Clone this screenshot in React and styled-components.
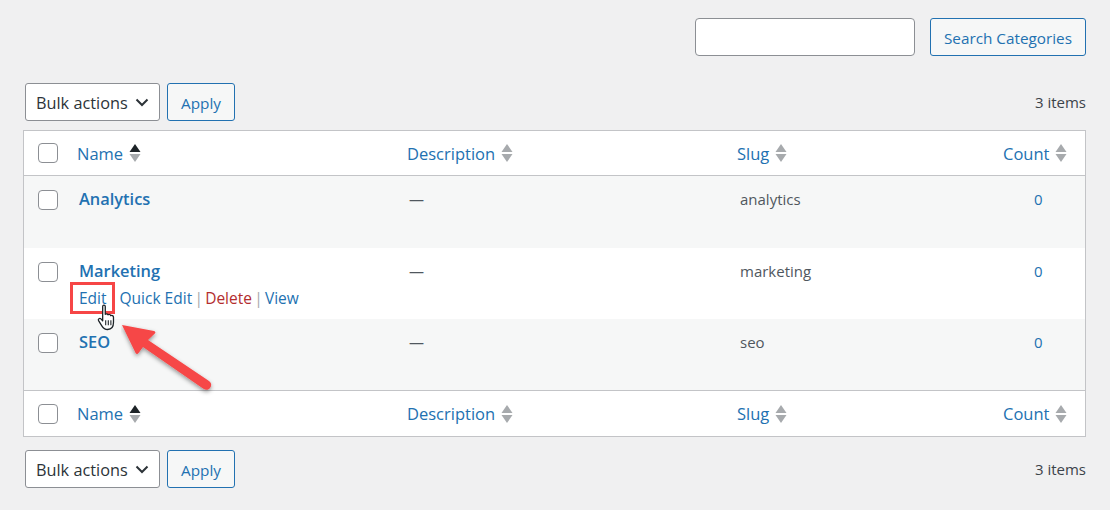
import styled, { createGlobalStyle } from 'styled-components';

const GlobalStyle = createGlobalStyle`
    html, body{
        margin: 0;
        padding: 0;
        background: #f0f0f1;
    }
    body{
        font-family: "Open Sans", "Noto Sans", "Liberation Sans", sans-serif;
        color: #3c434a;
    }
`;

const columns = [
    { label: 'Name', active: true },
    { label: 'Description' },
    { label: 'Slug' },
    { label: 'Count' },
];

const rows = [
    { name: 'Analytics', slug: 'analytics', alt: true },
    { name: 'Marketing', slug: 'marketing', actions: true },
    { name: 'SEO', slug: 'seo', alt: true },
];

function SortIcon({ active }){
    return (
        <SortSvg width="12" height="18" viewBox="0 0 12 18">
            <path d="M6 0 L11.5 8 H0.5 Z" fill={active ? '#1d2327' : '#a7aaad'} />
            <path d="M0.5 10 H11.5 L6 18 Z" fill="#a7aaad" />
        </SortSvg>
    );
}

function HeadRow({ bottom }){
    return (
        <Head $bottom={bottom}>
            <CheckCell><Check /></CheckCell>
            {columns.map(c => (
                <HeadCell key={c.label}>
                    {c.label}
                    <SortIcon active={c.active} />
                </HeadCell>
            ))}
        </Head>
    );
}

function BulkBar(){
    return (
        <BulkGroup>
            <Select>
                Bulk actions
                <svg width="14" height="9" viewBox="0 0 14 9">
                    <path d="M1.5 1.5 L7 7 L12.5 1.5" fill="none" stroke="#2c3338" strokeWidth="2" />
                </svg>
            </Select>
            <Button>Apply</Button>
        </BulkGroup>
    );
}

export default function App(){
    return (
        <Page>
            <GlobalStyle />
            <SearchBar>
                <SearchInput />
                <Button>Search Categories</Button>
            </SearchBar>
            <TopNav>
                <BulkBar />
                <Items>3 items</Items>
            </TopNav>
            <Table>
                <HeadRow />
                {rows.map(r => (
                    <Row key={r.name} $alt={r.alt}>
                        <CheckCell><Check /></CheckCell>
                        <NameCell>
                            <NameLink>{r.name}</NameLink>
                            {r.actions && (
                                <Actions>
                                    <ActionLink>Edit</ActionLink>
                                    <Sep />
                                    <ActionLink>Quick Edit</ActionLink>
                                    <Sep>|</Sep>
                                    <ActionLink $danger>Delete</ActionLink>
                                    <Sep>|</Sep>
                                    <ActionLink>View</ActionLink>
                                </Actions>
                            )}
                        </NameCell>
                        <TextCell>—</TextCell>
                        <SlugCell>{r.slug}</SlugCell>
                        <CountCell>0</CountCell>
                    </Row>
                ))}
                <HeadRow bottom />
            </Table>
            <BottomNav>
                <BulkBar />
                <Items>3 items</Items>
            </BottomNav>

            <EditBox />
            <Pointer width="20" height="27" viewBox="0 0 18 25">
                <path
                    d="M5 2.2 C5 0.6 7.4 0.6 7.4 2.2 V9.6 C8.2 8.8 9.6 9 9.9 10 C10.8 9.3 12.2 9.7 12.4 10.8 C13.4 10.2 15 10.8 15 12.2 V17 C15 20.5 13.4 23.6 9.6 23.6 C6.6 23.6 5.4 22.2 4.2 20.2 L1.2 15.4 C0.4 14 2.2 12.6 3.4 13.8 L5 15.6 Z"
                    fill="#fff" stroke="#1d2327" strokeWidth="1.2" strokeLinejoin="round"
                />
                <path d="M7.8 15 V19.6 M10.2 15 V19.6 M12.6 15 V19.6" stroke="#1d2327" strokeWidth="1" fill="none" />
            </Pointer>
            <Arrow width="100" height="76" viewBox="0 0 100 76">
                <defs>
                    <filter id="arrowShadow" x="-20%" y="-20%" width="140%" height="140%">
                        <feDropShadow dx="0" dy="2" stdDeviation="2" floodColor="#000" floodOpacity="0.4" />
                    </filter>
                </defs>
                <path
                    d="M1 3 L33 9 C34.5 9.4 34.8 10.8 33.8 11.6 L27 18 L88 59 C91 61.5 90.5 64 89 66 C87.5 68 85 68.5 82 66.5 L22 25 L17.5 31 C16.8 32.4 15.2 32.4 14.6 31 Z"
                    fill="#f64646" filter="url(#arrowShadow)"
                />
            </Arrow>
        </Page>
    );
}

const Page = styled.div`
    position: relative;
    box-sizing: border-box;
    width: 1110px;
    height: 510px;
    padding: 18px 24px 0 23px;
    overflow: hidden;
`;

const SearchBar = styled.div`
    display: flex;
    justify-content: flex-end;
    gap: 15px;
`;

const SearchInput = styled.div`
    box-sizing: border-box;
    width: 220px;
    height: 38px;
    background: #fff;
    border: 1px solid #8c8f94;
    border-radius: 4px;
`;

const Button = styled.div`
    box-sizing: border-box;
    height: 38px;
    padding: 1px 13px 0;
    display: flex;
    align-items: center;
    color: #2271b1;
    background: #f6f7f7;
    border: 1px solid #2271b1;
    border-radius: 3px;
    font-size: 15.3px;
`;

const TopNav = styled.div`
    display: flex;
    justify-content: space-between;
    align-items: center;
    margin-top: 27px;
    padding-left: 2px;
`;

const BottomNav = styled(TopNav)`
    margin-top: 13px;
`;

const BulkGroup = styled.div`
    display: flex;
    gap: 7px;
`;

const Select = styled.div`
    box-sizing: border-box;
    width: 135px;
    height: 38px;
    padding: 1px 10px 0;
    display: flex;
    align-items: center;
    justify-content: space-between;
    color: #2c3338;
    background: #fff;
    border: 1px solid #8c8f94;
    border-radius: 3px;
    font-size: 16.3px;
`;

const Items = styled.div`
    font-size: 15px;
    color: #3c434a;
`;

const Table = styled.div`
    margin-top: 9px;
    background: #fff;
    border: 1px solid #c3c4c7;
`;

const grid = `
    display: grid;
    grid-template-columns: 43px 330px 330px 266px 1fr;
`;

const Head = styled.div`
    ${grid}
    height: ${p => p.$bottom ? '45px' : '44px'};
    align-items: center;
    ${p => p.$bottom ? 'border-top: 1px solid #c3c4c7;' : 'border-bottom: 1px solid #c3c4c7;'}
`;

const HeadCell = styled.div`
    padding-left: 10px;
    display: flex;
    align-items: center;
    gap: 6px;
    color: #2271b1;
    font-size: 16.5px;
`;

const SortSvg = styled.svg`
    display: block;
`;

const Row = styled.div`
    ${grid}
    height: 71px;
    background: ${p => p.$alt ? '#f6f7f7' : '#fff'};
    &:nth-child(2){
        height: 72px;
    }
`;

const CheckCell = styled.div`
    display: flex;
    align-items: flex-start;
    padding: 14px 0 0 14px;
    ${Head} &{
        padding-top: 0;
        align-items: center;
    }
`;

const Check = styled.div`
    box-sizing: border-box;
    width: 20px;
    height: 20px;
    background: #fff;
    border: 1px solid #8c8f94;
    border-radius: 4px;
`;

const NameCell = styled.div`
    padding: 11px 0 0 12px;
`;

const NameLink = styled.div`
    color: #2271b1;
    font-size: 16.4px;
    font-weight: 600;
    line-height: 24px;
`;

const Actions = styled.div`
    display: flex;
    white-space: pre;
    font-size: 15.5px;
    line-height: 20px;
    margin-top: 5px;
`;

const ActionLink = styled.span`
    color: ${p => p.$danger ? '#b32d2e' : '#2271b1'};
`;

const Sep = styled.span`
    width: 13px;
    text-align: center;
    color: #a7aaad;
`;

const TextCell = styled.div`
    padding: 12px 0 0 12px;
    font-size: 15px;
    line-height: 23px;
    color: #50575e;
`;

const SlugCell = styled(TextCell)`
    padding-left: 13px;
`;

const CountCell = styled(TextCell)`
    padding-left: 41px;
    color: #2271b1;
`;

const EditBox = styled.div`
    position: absolute;
    left: 70px;
    top: 282px;
    width: 45px;
    height: 32px;
    box-sizing: border-box;
    border: 3px solid #f64646;
`;

const Pointer = styled.svg`
    position: absolute;
    left: 97px;
    top: 304px;
`;

const Arrow = styled.svg`
    position: absolute;
    left: 121px;
    top: 322px;
`;
